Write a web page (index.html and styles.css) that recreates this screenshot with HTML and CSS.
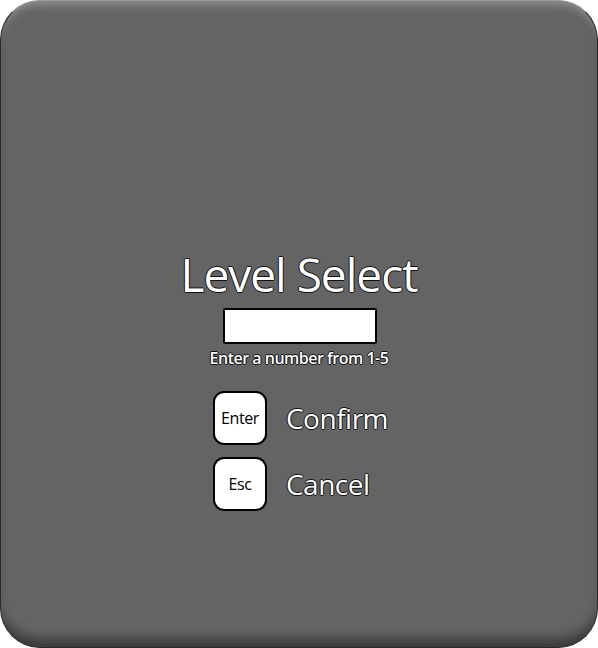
FILE: index.html
```html
<!DOCTYPE html>
<html>
<head>
<meta charset="utf-8">
<link rel="stylesheet" href="styles.css">
</head>
<body>
<div class="panel">
  <h1 class="title">Level Select</h1>
  <div class="input-box"></div>
  <div class="hint">Enter a number from 1-5</div>
  <div class="keys">
    <div class="key">Enter</div>
    <div class="action">Confirm</div>
    <div class="key">Esc</div>
    <div class="action">Cancel</div>
  </div>
</div>
</body>
</html>
```
FILE: styles.css
```css
html, body {
  margin: 0;
  padding: 0;
  background: #ffffff;
}
body {
  width: 598px;
  height: 648px;
  font-family: "Open Sans", "Noto Sans", sans-serif;
}
.panel {
  box-sizing: border-box;
  width: 598px;
  height: 648px;
  border-radius: 40px;
  background: #646464;
  border: 1px solid #2a2a2a;
  border-top-color: #9a9a9a;
  box-shadow: inset 0 10px 8px -6px rgba(255,255,255,0.28),
              inset 0 -14px 12px -6px rgba(0,0,0,0.45);
  display: flex;
  flex-direction: column;
  align-items: center;
  padding-top: 245px;
}
.title {
  margin: 0;
  font-weight: 400;
  font-size: 46px;
  line-height: 56px;
  letter-spacing: -1px;
  color: #fff;
  text-shadow: 1px 0 0 #111, -1px 0 0 #111, 0 1px 0 #111, 0 -1px 0 #111;
}
.input-box {
  margin-top: 6px;
  margin-left: 2px;
  width: 150px;
  height: 32px;
  background: #fff;
  border: 2px solid #000;
  border-radius: 2px;
}
.hint {
  margin-top: 3px;
  font-size: 16px;
  font-weight: 600;
  line-height: 22px;
  letter-spacing: -0.5px;
  color: #fff;
  text-shadow: 1px 0 0 #111, -1px 0 0 #111, 0 1px 0 #111, 0 -1px 0 #111;
}
.keys {
  margin-top: 22px;
  margin-left: 3px;
  display: grid;
  grid-template-columns: 54px auto;
  column-gap: 19px;
  row-gap: 12px;
  align-items: center;
}
.key {
  box-sizing: border-box;
  width: 54px;
  height: 54px;
  background: #fff;
  border: 2px solid #000;
  border-radius: 11px;
  display: flex;
  align-items: center;
  justify-content: center;
  font-size: 16px;
  font-weight: 500;
  letter-spacing: -0.4px;
  color: #000;
}
.action {
  font-size: 28px;
  letter-spacing: -0.5px;
  color: #fff;
  text-shadow: 1px 0 0 #111, -1px 0 0 #111, 0 1px 0 #111, 0 -1px 0 #111;
}
```
